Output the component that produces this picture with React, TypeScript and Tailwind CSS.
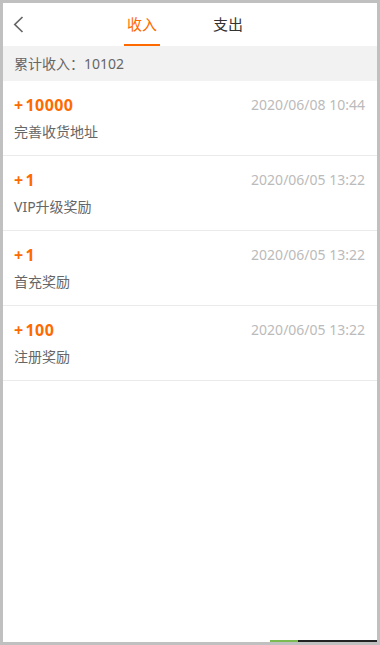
import React from "react";

const items = [
  { amount: "10000", date: "2020/06/08 10:44", desc: "完善收货地址" },
  { amount: "1", date: "2020/06/05 13:22", desc: "VIP升级奖励" },
  { amount: "1", date: "2020/06/05 13:22", desc: "首充奖励" },
  { amount: "100", date: "2020/06/05 13:22", desc: "注册奖励" },
];

export default function App() {
  return (
    <div
      className="w-[380px] h-[645px] border-[3px] border-[#c0c0c0] bg-white flex flex-col overflow-hidden"
      style={{ fontFamily: '"Noto Sans", "Noto Sans CJK SC", sans-serif' }}
    >
      {/* Header */}
      <div className="h-[43px] flex items-stretch shrink-0">
        <div className="w-[30px] flex items-center pl-[10px]">
          <svg width="11" height="17" viewBox="0 0 11 17" fill="none">
            <polyline points="9.5,1 1.8,8.5 9.5,16" stroke="#666" strokeWidth="1.7" fill="none" />
          </svg>
        </div>
        <div className="flex ml-[91px] gap-[50px]">
          <div className="relative w-[36px] flex items-center justify-center text-[15px] text-[#ff6a00]">
            收入
            <div className="absolute left-0 right-0 bottom-0 h-[2px] bg-[#ff6a00]" />
          </div>
          <div className="relative w-[36px] flex items-center justify-center text-[15px] text-[#333]">
            支出
          </div>
        </div>
      </div>

      {/* Summary */}
      <div className="h-[35px] shrink-0 bg-[#f2f2f2] flex items-center pl-[11px] text-[14px] text-[#666]">
        累计收入：10102
      </div>

      {/* List */}
      <div className="flex-1 flex flex-col">
        {items.map((it, i) => (
          <div key={i} className="h-[75px] border-b border-[#ebebeb] pl-[11px] pr-[12px] pt-[14px] shrink-0">
            <div className="flex items-center justify-between h-[20px]">
              <span className="text-[16px] font-bold text-[#ff6a00] leading-none tracking-[0.4px]">
                <span className="mr-[2px]">+</span>
                {it.amount}
              </span>
              <span className="text-[14px] text-[#bbbbbb] leading-none">{it.date}</span>
            </div>
            <div className="mt-[6px] h-[20px] flex items-center text-[14px] text-[#666]">{it.desc}</div>
          </div>
        ))}
        <div className="flex-1" />
        <div className="h-[2px] flex shrink-0">
          <div className="w-[267px]" />
          <div className="w-[28px] bg-[#7cbb52]" />
          <div className="flex-1 bg-[#222]" />
        </div>
      </div>
    </div>
  );
}
